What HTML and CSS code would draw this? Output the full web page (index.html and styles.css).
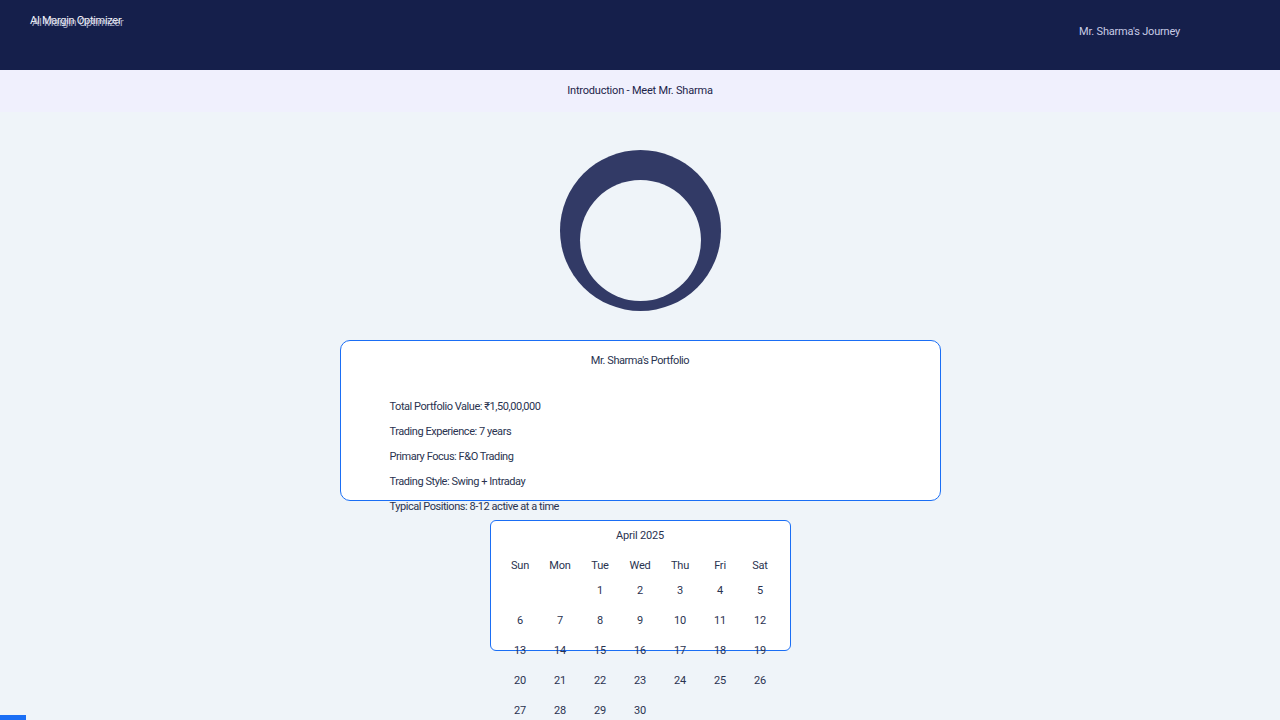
FILE: index.html
```html
<!DOCTYPE html>
<html lang="en">
<head>
<meta charset="utf-8">
<title>AI Margin Optimizer</title>
<link rel="stylesheet" href="styles.css">
</head>
<body>
<header class="topbar">
  <div class="brand">
    <span class="brand-text">AI Margin Optimizer</span>
    <span class="brand-text brand-ghost" aria-hidden="true">AI Margin Optimizer</span>
  </div>
  <nav class="journey">Mr. Sharma's Journey</nav>
</header>
<div class="stepbar">Introduction - Meet Mr. Sharma</div>
<main class="content">
  <div class="avatar-ring">
    <div class="avatar-hole"></div>
  </div>
  <section class="card portfolio">
    <h2 class="card-title">Mr. Sharma's Portfolio</h2>
    <ul class="facts">
      <li>Total Portfolio Value: ₹1,50,00,000</li>
      <li>Trading Experience: 7 years</li>
      <li>Primary Focus: F&amp;O Trading</li>
      <li>Trading Style: Swing + Intraday</li>
      <li>Typical Positions: 8-12 active at a time</li>
    </ul>
  </section>
  <section class="card calendar">
    <h2 class="cal-title">April 2025</h2>
    <div class="cal-grid">
      <span class="dow">Sun</span><span class="dow">Mon</span><span class="dow">Tue</span><span class="dow">Wed</span><span class="dow">Thu</span><span class="dow">Fri</span><span class="dow">Sat</span>
      <span></span><span></span><span>1</span><span>2</span><span>3</span><span>4</span><span>5</span>
      <span>6</span><span>7</span><span>8</span><span>9</span><span>10</span><span>11</span><span>12</span>
      <span>13</span><span>14</span><span>15</span><span>16</span><span>17</span><span>18</span><span>19</span>
      <span>20</span><span>21</span><span>22</span><span>23</span><span>24</span><span>25</span><span>26</span>
      <span>27</span><span>28</span><span>29</span><span>30</span><span></span><span></span><span></span>
    </div>
  </section>
</main>
<div class="progress"></div>
</body>
</html>
```
FILE: styles.css
```css
* { box-sizing: border-box; }
html, body { margin: 0; padding: 0; }
body {
  width: 1280px;
  height: 720px;
  overflow: hidden;
  background: #eff4f9;
  font-family: Roboto, "Liberation Sans", sans-serif;
  font-size: 11px;
  letter-spacing: -0.2px;
  color: #2a3350;
  position: relative;
}
.topbar {
  height: 70px;
  background: #151f4b;
  display: flex;
  justify-content: space-between;
  align-items: flex-start;
  padding: 0 100px 0 30px;
}
.brand {
  position: relative;
  margin-top: 14px;
  font-size: 11px;
  letter-spacing: -0.3px;
  color: #f2f3fa;
  white-space: nowrap;
}
.brand-ghost {
  position: absolute;
  left: 2px;
  top: 2px;
  color: #c9cce0;
  opacity: 0.8;
}
.journey {
  margin-top: 25px;
  color: #c8cbe6;
  font-size: 11px;
}
.stepbar {
  height: 42px;
  padding-bottom: 2px;
  background: #f0f0fd;
  display: flex;
  align-items: center;
  justify-content: center;
  color: #1d244a;
}
.content {
  display: flex;
  flex-direction: column;
  align-items: center;
  padding-top: 38px;
}
.avatar-ring {
  width: 161px;
  height: 161px;
  border-radius: 50%;
  background: #323a66;
  display: flex;
  justify-content: center;
  padding-top: 30px;
}
.avatar-hole {
  width: 121px;
  height: 121px;
  border-radius: 50%;
  background: #eff4f9;
}
.card {
  background: #ffffff;
  border: 1px solid #1a6ef5;
}
.portfolio {
  margin-top: 29px;
  width: 601px;
  height: 161px;
  border-radius: 10px;
  padding: 13px 0 0 49px;
  letter-spacing: -0.45px;
}
.card-title {
  margin: 0 0 0 -49px;
  font-size: 11px;
  font-weight: 400;
  text-align: center;
  line-height: 14px;
}
.facts {
  list-style: none;
  margin: 32px 0 0;
  padding: 0;
}
.facts li {
  height: 25px;
  line-height: 14px;
}
.calendar {
  margin-top: 19px;
  width: 301px;
  height: 131px;
  border-radius: 6px;
  padding: 8px 0 0;
}
.cal-title {
  margin: 0;
  font-size: 11px;
  font-weight: 400;
  text-align: center;
  line-height: 14px;
}
.cal-grid {
  margin: 16px auto 0;
  width: 280px;
  display: grid;
  grid-template-columns: repeat(7, 40px);
  grid-template-rows: 25px;
  grid-auto-rows: 30px;
  text-align: center;
  line-height: 14px;
}
.progress {
  position: absolute;
  left: 0;
  bottom: 0;
  width: 26px;
  height: 5px;
  background: #1a6ef5;
}
```
